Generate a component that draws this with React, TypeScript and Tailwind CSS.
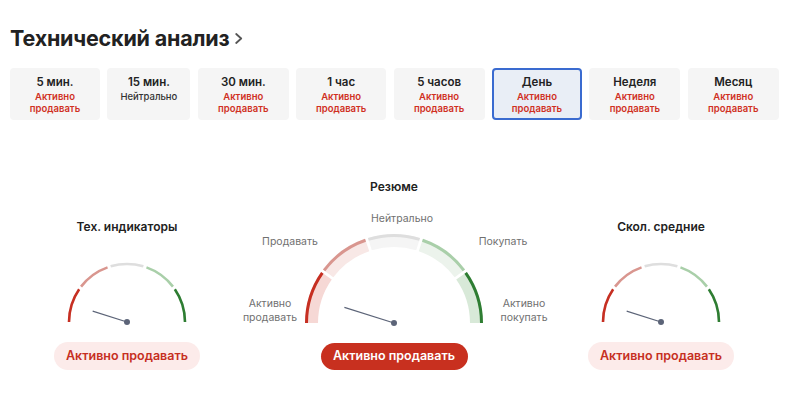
const RED = "#c8301f";

const tabs = [
  { label: "5 мин.", status: "sell" },
  { label: "15 мин.", status: "neutral" },
  { label: "30 мин.", status: "sell" },
  { label: "1 час", status: "sell" },
  { label: "5 часов", status: "sell" },
  { label: "День", status: "sell", active: true },
  { label: "Неделя", status: "sell" },
  { label: "Месяц", status: "sell" },
];

const strokeColors = ["#c62f22", "#d9968f", "#dedede", "#a9cfa9", "#2e7d32"];
const fillColors = ["#f6d8d5", "#f8e8e6", "#f5f5f5", "#ecf3ec", "#d8e9d8"];

function pt(cx: number, cy: number, r: number, a: number) {
  const rad = (a * Math.PI) / 180;
  return [cx + r * Math.cos(rad), cy - r * Math.sin(rad)];
}

function arc(cx: number, cy: number, r: number, a1: number, a2: number) {
  const [x1, y1] = pt(cx, cy, r, a1);
  const [x2, y2] = pt(cx, cy, r, a2);
  return `M${x1} ${y1} A${r} ${r} 0 0 1 ${x2} ${y2}`;
}

function sector(cx: number, cy: number, ro: number, ri: number, a1: number, a2: number) {
  const [x1, y1] = pt(cx, cy, ro, a1);
  const [x2, y2] = pt(cx, cy, ro, a2);
  const [x3, y3] = pt(cx, cy, ri, a2);
  const [x4, y4] = pt(cx, cy, ri, a1);
  return `M${x1} ${y1} A${ro} ${ro} 0 0 1 ${x2} ${y2} L${x3} ${y3} A${ri} ${ri} 0 0 0 ${x4} ${y4} Z`;
}

function segAngles(i: number, gap: number) {
  const a1 = 180 - 36 * i - (i === 0 ? 0 : gap);
  const a2 = 180 - 36 * (i + 1) + (i === 4 ? 0 : gap);
  return [a1, a2];
}

function Needle({ cx, cy, len }: { cx: number; cy: number; len: number }) {
  const [x, y] = pt(cx, cy, len, 162.5);
  return (
    <g>
      <line x1={cx} y1={cy} x2={x} y2={y} stroke="#5c6478" strokeWidth="1.2" />
      <circle cx={cx} cy={cy} r="3" fill="#5c6478" />
    </g>
  );
}

function SmallGauge({ title }: { title: string }) {
  const cx = 62;
  const cy = 61;
  return (
    <div className="flex flex-col items-center">
      <div className="text-[12px] leading-[18px] font-semibold text-[#222]">{title}</div>
      <svg width="124" height="64" className="mt-[25px]">
        {strokeColors.map((c, i) => {
          const [a1, a2] = segAngles(i, 1.6);
          return <path key={i} d={arc(cx, cy, 58, a1, a2)} stroke={c} strokeWidth="2.6" fill="none" />;
        })}
        <Needle cx={cx} cy={cy} len={36} />
      </svg>
      <div className="mt-[17px] flex h-[28px] w-[146px] items-center justify-center rounded-full bg-[#fcebea] text-[12.5px] font-semibold text-[#c62f22]">
        Активно продавать
      </div>
    </div>
  );
}

function SummaryGauge() {
  const cx = 140;
  const cy = 92;
  return (
    <div className="flex flex-col items-center">
      <div className="text-[12px] leading-[18px] font-semibold text-[#222]">Резюме</div>
      <div className="relative mt-[9px] h-[122px] w-[280px] text-[10.5px] leading-[14px] text-[#707070]">
        <span className="absolute left-[148px] top-[7px] -translate-x-1/2 whitespace-nowrap">Нейтрально</span>
        <span className="absolute left-[36px] top-[30px] -translate-x-1/2 whitespace-nowrap">Продавать</span>
        <span className="absolute left-[249px] top-[30px] -translate-x-1/2 whitespace-nowrap">Покупать</span>
        <span className="absolute left-[16px] top-[92px] -translate-x-1/2 text-center">
          Активно
          <br />
          продавать
        </span>
        <span className="absolute left-[270px] top-[92px] -translate-x-1/2 text-center">
          Активно
          <br />
          покупать
        </span>
        <svg width="280" height="96" className="mt-[26px]">
          {strokeColors.map((c, i) => {
            const [a1, a2] = segAngles(i, 1);
            return (
              <g key={i}>
                <path d={sector(cx, cy, 89, 76, a1, a2)} fill={fillColors[i]} />
                <path d={arc(cx, cy, 87.5, a1, a2)} stroke={c} strokeWidth="3" fill="none" />
              </g>
            );
          })}
          <Needle cx={cx} cy={cy} len={52} />
        </svg>
      </div>
      <div
        className="mt-[16px] flex h-[27px] w-[147px] items-center justify-center rounded-full text-[12.5px] font-semibold text-white"
        style={{ backgroundColor: RED }}
      >
        Активно продавать
      </div>
    </div>
  );
}

export default function App() {
  return (
    <div className="h-[408px] w-[800px] bg-white font-['Inter','Noto_Sans',sans-serif]">
      <div className="flex items-center px-[10px] pt-[24px]">
        <h1 className="text-[21.5px] leading-[28px] font-bold tracking-[-0.2px] text-[#222]">Технический анализ</h1>
        <svg width="8" height="11" viewBox="0 0 8 11" className="ml-[6px] mt-[1px]">
          <polyline points="1.2,1 6.2,5.5 1.2,10" fill="none" stroke="#555" strokeWidth="1.8" strokeLinecap="round" strokeLinejoin="round" />
        </svg>
      </div>

      <div className="mt-[16px] grid grid-cols-[90px_83px_91px_90px_91px_90px_91px_91px] gap-[7.4px] px-[10px]">
        {tabs.map((t) => (
          <div
            key={t.label}
            className={
              t.active
                ? "h-[52px] rounded-[4px] border-2 border-[#3a6bd0] bg-[#e9eef6] pt-[4px] text-center"
                : "h-[52px] rounded-[4px] bg-[#f5f5f5] pt-[6px] text-center"
            }
          >
            <div className="text-[11.5px] leading-[16px] font-semibold text-[#222]">{t.label}</div>
            {t.status === "sell" ? (
              <div className="mt-[1px] text-[9.5px] leading-[12px] font-semibold text-[#d0301f]">
                Активно
                <br />
                продавать
              </div>
            ) : (
              <div className="mt-[1px] text-[9.5px] leading-[12px] font-medium text-[#333]">Нейтрально</div>
            )}
          </div>
        ))}
      </div>

      <div className="mt-[58px] grid grid-cols-[254px_280px_254px] items-end">
        <SmallGauge title="Тех. индикаторы" />
        <SummaryGauge />
        <SmallGauge title="Скол. средние" />
      </div>
    </div>
  );
}
